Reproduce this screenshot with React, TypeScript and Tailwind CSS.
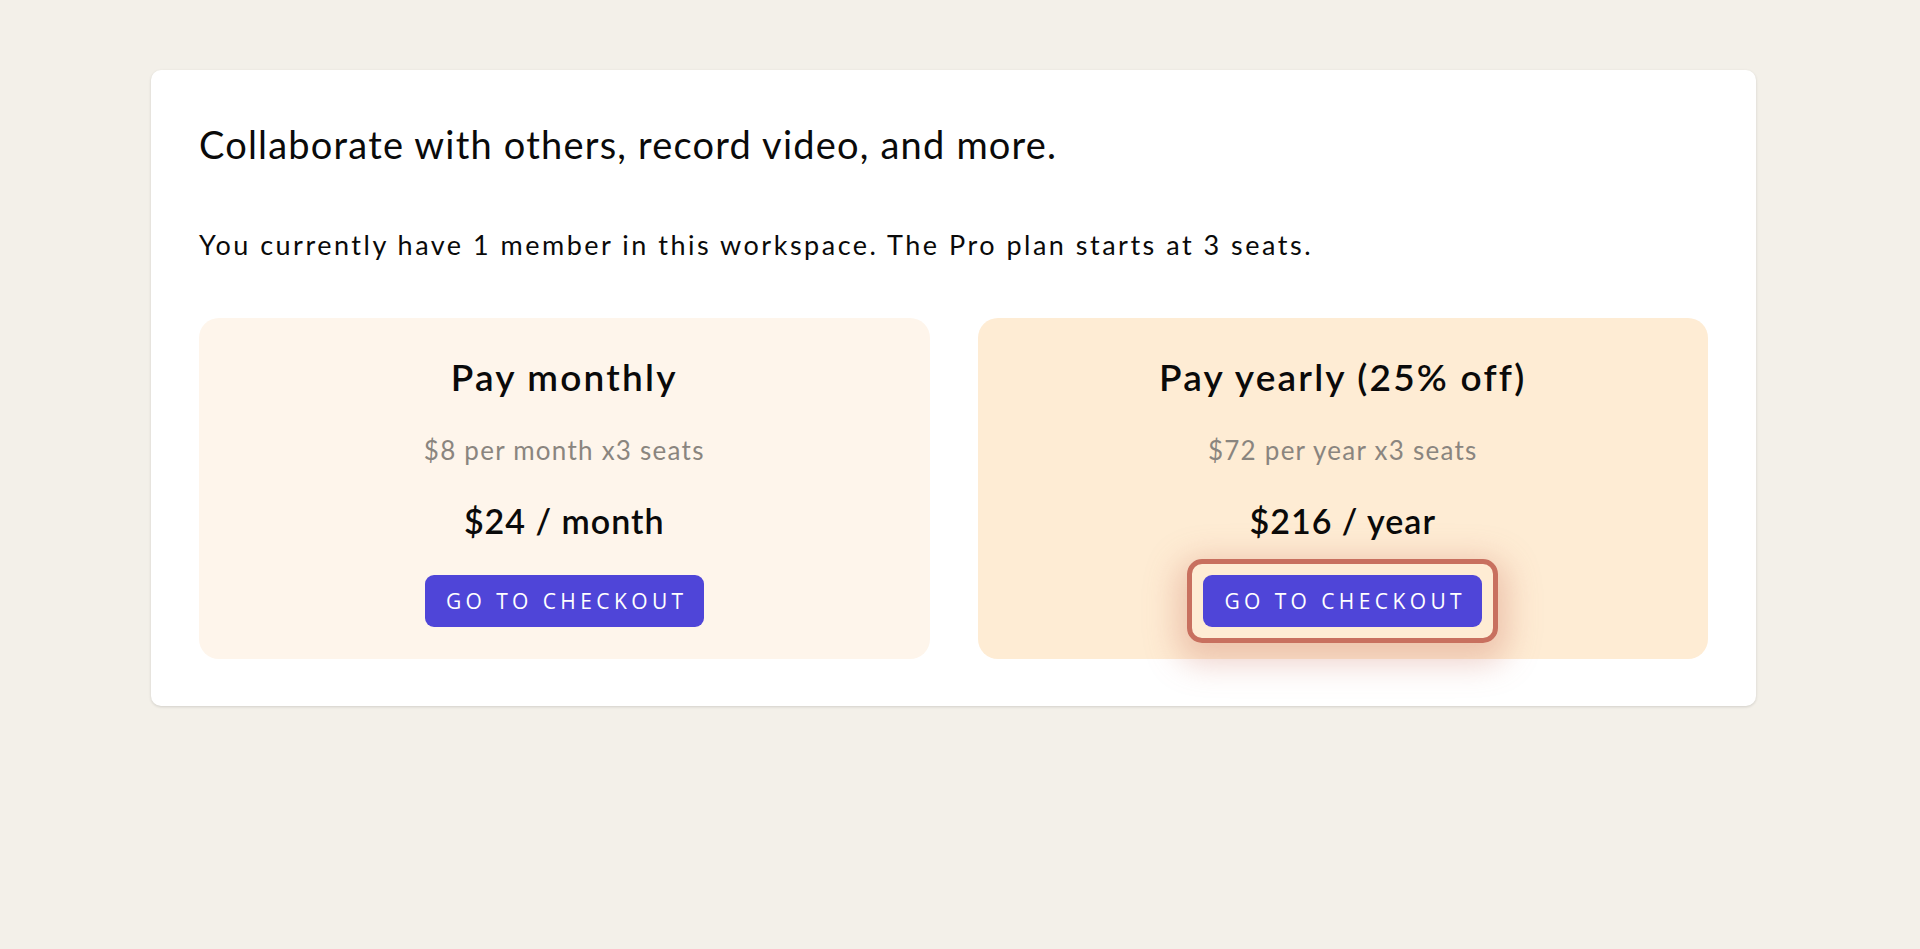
import React from 'react';

interface IPlan {
  title: string;
  perSeat: string;
  total: string;
  bg: string;
  focused?: boolean;
}

const plans: IPlan[] = [
  {
    title: 'Pay monthly',
    perSeat: '$8 per month x3 seats',
    total: '$24 / month',
    bg: 'bg-[#fef5eb]',
  },
  {
    title: 'Pay yearly (25% off)',
    perSeat: '$72 per year x3 seats',
    total: '$216 / year',
    bg: 'bg-[#feecd4]',
    focused: true,
  },
];

function CheckoutButton({ focused }: { focused?: boolean }) {
  const button = (
    <button
      type="button"
      className="h-[52px] rounded-[9px] bg-[#4f45d8] pr-4 pl-[21px] font-['Open_Sans',sans-serif] text-[21px] leading-none tracking-[4.4px] text-white uppercase"
    >
      Go to checkout
    </button>
  );

  if (!focused) return button;

  // focus ring drawn around the button, pulled back so it doesn't move the layout
  return (
    <div className="-m-4 inline-flex rounded-[15px] border-[5px] border-[#c8705f] p-[11px] shadow-[0_10px_32px_10px_rgba(206,120,100,0.35)]">
      {button}
    </div>
  );
}

function PlanCard({ title, perSeat, total, bg, focused }: IPlan) {
  return (
    <div className={`flex flex-col items-center rounded-[20px] ${bg} pt-[37px] pb-[32px]`}>
      <h3 className="text-[37px] leading-[1.2] font-semibold tracking-[2.2px] text-[#0a0a0a]">{title}</h3>
      <p className="mt-[36px] text-[26px] leading-[1.2] tracking-[1.25px] text-[#8a857f]">{perSeat}</p>
      <p className="mt-[34px] text-[34px] leading-[1.2] font-semibold tracking-[1px] text-[#0a0a0a]">{total}</p>
      <div className="mt-[34px] flex">
        <CheckoutButton focused={focused} />
      </div>
    </div>
  );
}

export default function App() {
  return (
    <div className="min-h-screen bg-[#f3f0e9] pt-[70px] pl-[151px] font-['Lato',sans-serif]">
      <div className="w-[1605px] rounded-[10px] bg-white px-12 pt-[52px] pb-[47px] shadow-[0_1px_3px_rgba(0,0,0,0.14)]">
        <h1 className="text-[38px] leading-[1.2] tracking-[1.2px] text-[#0a0a0a]">
          Collaborate with others, record video, and more.
        </h1>
        <p className="mt-[61px] text-[27px] leading-[1.2] tracking-[2.5px] text-[#0a0a0a]">
          You currently have 1 member in this workspace. The Pro plan starts at 3 seats.
        </p>
        <div className="mt-[57px] grid grid-cols-2 gap-12">
          {plans.map((plan) => (
            <PlanCard key={plan.title} {...plan} />
          ))}
        </div>
      </div>
    </div>
  );
}
